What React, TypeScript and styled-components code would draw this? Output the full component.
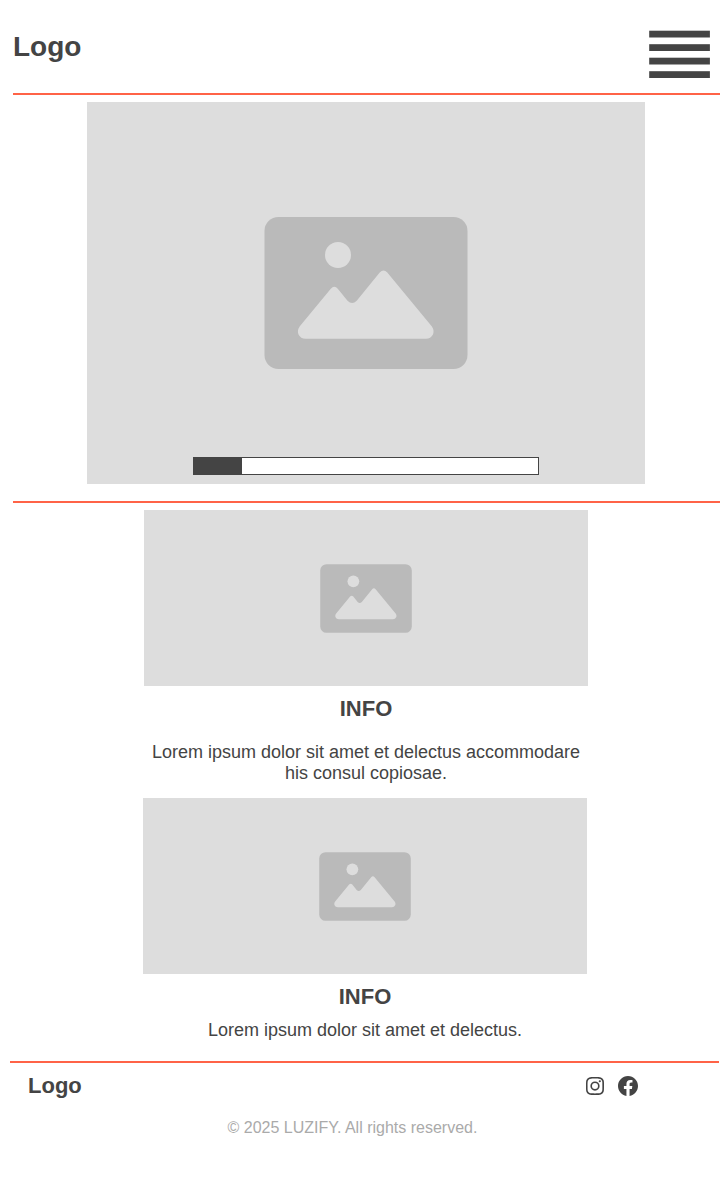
import React from "react";
import styled, { createGlobalStyle } from "styled-components";
import { BiLogoFacebookCircle, BiLogoInstagram } from "react-icons/bi";

const ink = "#444444";
const accent = "#ff6347";

const GlobalStyle = createGlobalStyle`
  *, *::before, *::after { box-sizing: border-box; }
  body {
    margin: 0;
    background: #ffffff;
    color: ${ink};
    font-family: "Liberation Sans", Arial, sans-serif;
  }
  h2, p { margin: 0; }
`;

const Header = styled.header`
  display: flex;
  align-items: flex-start;
  justify-content: space-between;
  height: 95px;
  margin: 0 8px 0 13px;
  padding: 30px 10px 0 0;
  border-bottom: 2px solid ${accent};
`;

const Logo = styled.a<{ $small?: boolean }>`
  color: ${ink};
  font-size: ${(p) => (p.$small ? 22 : 28)}px;
  line-height: ${(p) => (p.$small ? 26 : 34)}px;
  font-weight: 700;
  text-decoration: none;
`;

const MenuButton = styled.button`
  padding: 0;
  border: 0;
  background: none;
  color: ${ink};
  cursor: pointer;

  svg { display: block; }
`;

const HeroSection = styled.section`
  display: flex;
  justify-content: center;
  padding: 7px 8px 17px 12px;
`;

const Placeholder = styled.div<{ $width: number; $height: number }>`
  position: relative;
  display: flex;
  align-items: center;
  justify-content: center;
  width: 100%;
  max-width: ${(p) => p.$width}px;
  height: ${(p) => p.$height}px;
  background: #dddddd;

  svg { display: block; }
`;

const Progress = styled.progress`
  position: absolute;
  bottom: 9px;
  left: 19%;
  width: 62%;
  height: 18px;
  border: 1px solid ${ink};
  background: #ffffff;
  appearance: none;

  &::-webkit-progress-inner-element { height: 100%; }
  &::-webkit-progress-bar { background: #ffffff; }
  &::-webkit-progress-value { background: ${ink}; }
  &::-moz-progress-bar { background: ${ink}; }
`;

const Divider = styled.hr`
  height: 2px;
  margin: 0 8px 0 13px;
  border: 0;
  background: ${accent};
`;

const InfoCard = styled.article<{ $inset: number; $gap: number }>`
  display: flex;
  flex-direction: column;
  align-items: center;
  padding: 0 8px 0 ${(p) => p.$inset}px;
  text-align: center;

  h2 {
    margin: 10px 0 ${(p) => p.$gap}px;
    font-size: 22px;
    line-height: 26px;
  }

  p {
    max-width: 444px;
    font-size: 18px;
    line-height: 21px;
  }
`;

const Cards = styled.section`
  display: flex;
  flex-direction: column;
  gap: 14px;
  padding: 7px 0 20px;
`;

const Footer = styled.footer`
  margin: 0 9px 0 10px;
  border-top: 2px solid ${accent};
`;

const FooterRow = styled.div`
  display: flex;
  align-items: center;
  justify-content: space-between;
  padding: 10px 79px 0 18px;
`;

const Socials = styled.nav`
  display: flex;
  gap: 9px;

  a { color: ${ink}; }
  svg { display: block; }
`;

const Copyright = styled.p`
  padding: 19px 24px 0 0;
  color: #aaaaaa;
  font-size: 16px;
  line-height: 20px;
  text-align: center;
`;

function ImageGlyph({ width, height }: { width: number; height: number }) {
  return (
    <svg width={width} height={height} viewBox="-0.5 0 204 152" aria-hidden="true">
      <rect width="203" height="152" rx="14" fill="#bababa" />
      <circle cx="73.5" cy="38" r="13" fill="#dddddd" />
      <path
        fill="#dddddd"
        d="M35.3 109.2 66.3 71.8Q69.8 67.6 73.3 71.8L83 83.7Q87.6 88.4 92.2 83.7L115.2 55.5Q119 51.3 122.8 55.5L167.2 109.2C171.6 114.8 167.8 121.8 161.5 121.8H41.2C34.6 121.8 31 114.8 35.3 109.2Z"
      />
    </svg>
  );
}

function MenuGlyph() {
  return (
    <svg width="61" height="48" viewBox="0 0 61 48" fill="currentColor" aria-hidden="true">
      {[0.7, 14.2, 27.7, 41.2].map((y) => (
        <rect key={y} x="0.2" y={y} width="60.7" height="6.8" />
      ))}
    </svg>
  );
}

export default function App() {
  return (
    <>
      <GlobalStyle />
      <Header>
        <Logo href="#">Logo</Logo>
        <MenuButton type="button" aria-label="Menu">
          <MenuGlyph />
        </MenuButton>
      </Header>
      <main>
        <HeroSection>
          <Placeholder $width={558} $height={382}>
            <ImageGlyph width={204} height={152} />
            <Progress value={14} max={100} aria-label="Slide progress" />
          </Placeholder>
        </HeroSection>
        <Divider />
        <Cards>
          <InfoCard $inset={12} $gap={20}>
            <Placeholder $width={444} $height={176}>
              <ImageGlyph width={92} height={69} />
            </Placeholder>
            <h2>INFO</h2>
            <p>Lorem ipsum dolor sit amet et delectus accommodare his consul copiosae.</p>
          </InfoCard>
          <InfoCard $inset={10} $gap={10}>
            <Placeholder $width={444} $height={176}>
              <ImageGlyph width={92} height={69} />
            </Placeholder>
            <h2>INFO</h2>
            <p>Lorem ipsum dolor sit amet et delectus.</p>
          </InfoCard>
        </Cards>
      </main>
      <Footer>
        <FooterRow>
          <Logo href="#" $small>Logo</Logo>
          <Socials aria-label="Social media">
            <a href="#" aria-label="Instagram">
              <BiLogoInstagram size={24} />
            </a>
            <a href="#" aria-label="Facebook">
              <BiLogoFacebookCircle size={24} />
            </a>
          </Socials>
        </FooterRow>
        <Copyright>© 2025 LUZIFY. All rights reserved.</Copyright>
      </Footer>
    </>
  );
}
